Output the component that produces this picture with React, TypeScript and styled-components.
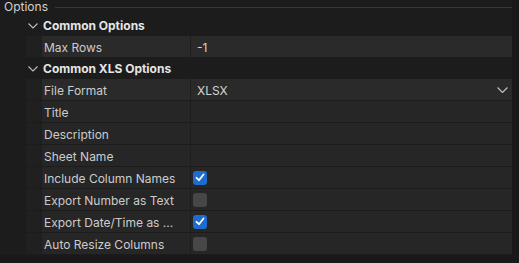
import React from 'react';
import styled, { createGlobalStyle } from 'styled-components';

const GlobalStyle = createGlobalStyle`
  html, body {
    margin: 0;
    padding: 0;
    background: #1c1c1c;
  }
  body {
    font-family: Inter, "Noto Sans", sans-serif;
    font-size: 12px;
    color: #cfcfcf;
  }
`;

const Page = styled.div`
  display: flex;
  width: 519px;
  height: 263px;
  overflow: hidden;
  background: #1c1c1c;
`;

const Main = styled.div`
  flex: 1;
  display: flex;
  flex-direction: column;
`;

const Track = styled.div`
  width: 7px;
  background: #191919;
`;

const TitleBar = styled.div`
  display: flex;
  align-items: center;
  height: 14px;
  padding-left: 4px;
  gap: 7px;
  color: #d0d0d0;
  line-height: 14px;
`;

const TitleLine = styled.div`
  flex: 1;
  height: 1px;
  background: #383838;
`;

const GroupHeader = styled.div`
  display: flex;
  align-items: center;
  height: 22px;
  padding-left: 28px;
  padding-top: 1px;
  box-sizing: border-box;
  gap: 5px;
  font-weight: 700;
  color: #e6e6e6;
`;

const Rows = styled.div`
  display: flex;
  flex-direction: column;
  gap: 1px;
  margin-left: 26px;
`;

const Row = styled.div<{ $active?: boolean }>`
  display: grid;
  grid-template-columns: 15px 148px 1fr;
  gap: 1px;
  height: 21px;
  background: #1e1e1e;
  & > div:not(:first-child) {
    background: ${p => (p.$active ? '#2a2a2a' : '#262626')};
  }
`;

const Indent = styled.div`
  background: #202020;
`;

const Label = styled.div`
  display: flex;
  align-items: center;
  padding: 1px 0 0 2px;
  white-space: nowrap;
  overflow: hidden;
  color: #cccccc;
`;

const Value = styled.div`
  display: flex;
  align-items: center;
  justify-content: space-between;
  padding: 1px 4px 0 6px;
  color: #d4d4d4;
`;

const Check = styled.div<{ $on: boolean }>`
  width: 14px;
  height: 14px;
  border-radius: 3px;
  margin: -1px 0 0 -4px;
  background: ${p => (p.$on ? '#1d6cd0' : '#474747')};
  display: flex;
  align-items: center;
  justify-content: center;
`;

const Bottom = styled.div`
  flex: 1;
  margin-top: 1px;
  background: #191919;
`;

const Chevron = ({ size = 10 }: { size?: number }) => (
  <svg width={size} height={size * 0.6} viewBox="0 0 10 6" fill="none">
    <path d="M0.5 0.5 L5 5 L9.5 0.5" stroke="#bdbdbd" strokeWidth="1.1" />
  </svg>
);

const Tick = () => (
  <svg width="10" height="9" viewBox="0 0 10 9" fill="none">
    <path d="M1.5 4.8 L4 7.2 L8.5 1.5" stroke="#ffffff" strokeWidth="1.8" strokeLinecap="round" strokeLinejoin="round" />
  </svg>
);

type Field = { label: string; value?: string; check?: boolean; select?: boolean; active?: boolean };

const groups: { title: string; fields: Field[] }[] = [
  { title: 'Common Options', fields: [{ label: 'Max Rows', value: '-1', active: true }] },
  {
    title: 'Common XLS Options',
    fields: [
      { label: 'File Format', value: 'XLSX', select: true, active: true },
      { label: 'Title', value: '' },
      { label: 'Description', value: '' },
      { label: 'Sheet Name', value: '' },
      { label: 'Include Column Names', check: true },
      { label: 'Export Number as Text', check: false },
      { label: 'Export Date/Time as ...', check: true },
      { label: 'Auto Resize Columns', check: false },
    ],
  },
];

export default function App() {
  return (
    <>
      <GlobalStyle />
      <Page>
        <Main>
          <TitleBar>
            Options
            <TitleLine />
          </TitleBar>
          {groups.map(g => (
            <React.Fragment key={g.title}>
              <GroupHeader>
                <Chevron />
                {g.title}
              </GroupHeader>
              <Rows>
                {g.fields.map(f => (
                  <Row key={f.label} $active={f.active}>
                    <Indent />
                    <Label>{f.label}</Label>
                    <Value>
                      {f.check !== undefined ? (
                        <Check $on={f.check}>{f.check && <Tick />}</Check>
                      ) : (
                        <span>{f.value}</span>
                      )}
                      {f.select && <Chevron size={11} />}
                    </Value>
                  </Row>
                ))}
              </Rows>
            </React.Fragment>
          ))}
          <Bottom />
        </Main>
        <Track />
      </Page>
    </>
  );
}
